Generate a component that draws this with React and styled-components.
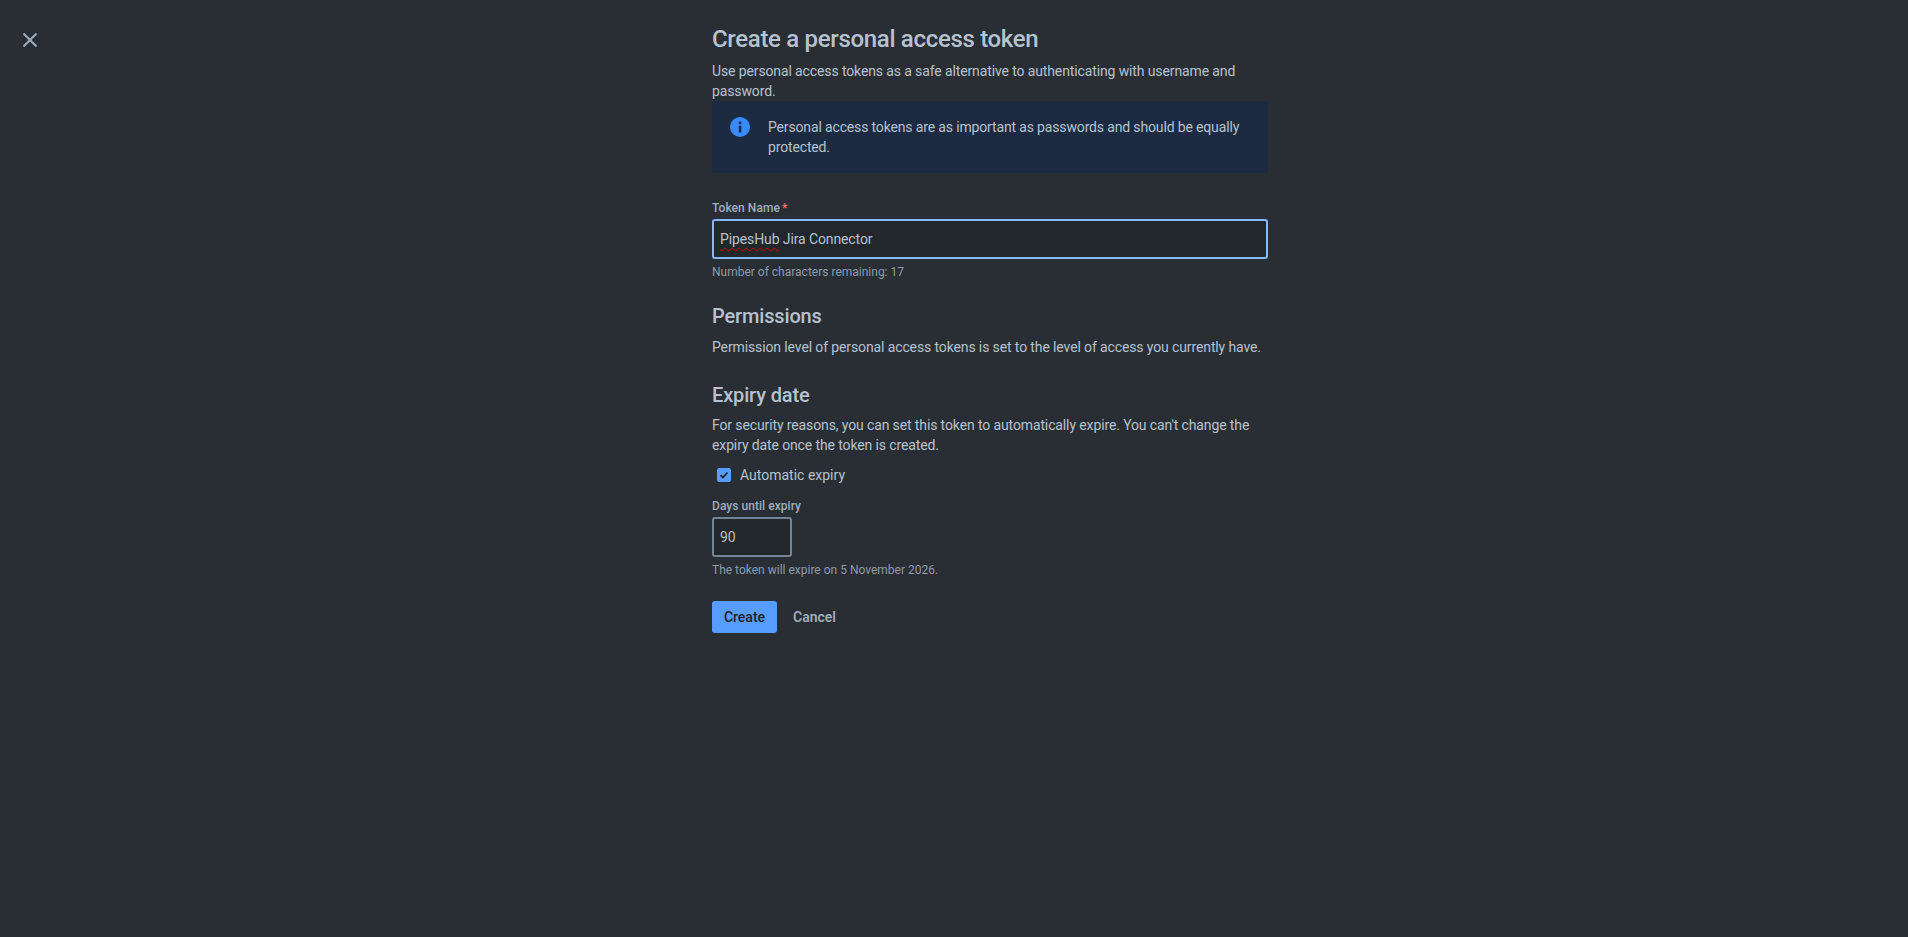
import styled, { createGlobalStyle } from "styled-components"

const Global = createGlobalStyle`
body{
  margin:0;
  background:#292E35;
  font-family:Roboto,"Noto Sans",sans-serif;
  color:#B6C2CF;
}
`

const App = () => {
  return (
    <Page>
      <Global />
      <CloseColumn>
        <CloseButton aria-label="Close">
          <svg width="16" height="16" viewBox="0 0 16 16" fill="none" stroke="#9FADBC" strokeWidth="2">
            <path d="M1.5 1.5l13 13M14.5 1.5l-13 13" />
          </svg>
        </CloseButton>
      </CloseColumn>
      <Form>
        <Title>Create a personal access token</Title>
        <Text>Use personal access tokens as a safe alternative to authenticating with username and password.</Text>
        <InfoBox>
          <InfoIcon width="24" height="24" viewBox="0 0 24 24">
            <circle cx="12" cy="12" r="10" fill="#388BFF" />
            <rect x="10.8" y="10.8" width="2.5" height="6.7" rx="0.5" fill="#1C2B41" />
            <circle cx="12.05" cy="7.9" r="1.4" fill="#1C2B41" />
          </InfoIcon>
          <InfoText>Personal access tokens are as important as passwords and should be equally protected.</InfoText>
        </InfoBox>

        <Label $top={27}>Token Name<Required>*</Required></Label>
        <FakeInput $focused>
          <Misspelled>PipesHub</Misspelled> Jira Connector
        </FakeInput>
        <Helper>Number of characters remaining: 17</Helper>

        <Heading $top={24}>Permissions</Heading>
        <Text $top={9}>Permission level of personal access tokens is set to the level of access you currently have.</Text>

        <Heading $top={26}>Expiry date</Heading>
        <Text $top={8}>For security reasons, you can set this token to automatically expire. You can't change the expiry date once the token is created.</Text>
        <CheckRow>
          <CheckBox>
            <svg width="10" height="10" viewBox="0 0 10 10" fill="none" stroke="#1D2125" strokeWidth="1.8">
              <path d="M1.5 5.2l2.4 2.3 4.6-5" />
            </svg>
          </CheckBox>
          Automatic expiry
        </CheckRow>

        <Label $top={13}>Days until expiry</Label>
        <FakeInput $width={80}>90</FakeInput>
        <Helper>The token will expire on 5 November 2026.</Helper>

        <Actions>
          <PrimaryButton>Create</PrimaryButton>
          <LinkButton>Cancel</LinkButton>
        </Actions>
      </Form>
    </Page>
  )
}

const Page = styled.div`
display:grid;
grid-template-columns:712px 556px;
min-height:100vh;
box-sizing:border-box;
padding-top:25px;
`
const CloseColumn = styled.div`
padding-left:22px;
padding-top:7px;
`
const CloseButton = styled.button`
display:block;
width:16px;
height:16px;
padding:0;
border:0;
background:none;
`
const Form = styled.div`
display:flex;
flex-direction:column;
`
const Title = styled.h1`
margin:0 0 8px;
font-size:24px;
line-height:28px;
font-weight:500;
letter-spacing:-0.32px;
color:#B6C2CF;
`
const Heading = styled.h2`
margin:${p => p.$top}px 0 0;
font-size:20px;
line-height:24px;
font-weight:500;
letter-spacing:-0.15px;
color:#B6C2CF;
`
const Text = styled.p`
margin:${p => p.$top || 0}px 0 0;
font-size:14px;
line-height:20px;
letter-spacing:-0.12px;
color:#B6C2CF;
`
const InfoBox = styled.div`
display:flex;
gap:16px;
padding:16px;
background:#1C2B41;
border-radius:3px;
`
const InfoIcon = styled.svg`
flex-shrink:0;
margin-top:-2px;
`
const InfoText = styled.div`
font-size:14px;
line-height:20px;
letter-spacing:-0.15px;
color:#B6C2CF;
`
const Label = styled.label`
margin-top:${p => p.$top}px;
font-size:12px;
line-height:16px;
font-weight:500;
letter-spacing:0.05px;
color:#9FADBC;
`
const Required = styled.span`
margin-left:2px;
color:#F87168;
`
const FakeInput = styled.div`
box-sizing:border-box;
display:flex;
align-items:center;
white-space:pre;
width:${p => (p.$width ? `${p.$width}px` : "100%")};
height:40px;
margin-top:3px;
padding:0 6px;
background:#22272B;
border:2px solid ${p => (p.$focused ? "#85B8FF" : "#738496")};
border-radius:3px;
font-size:14px;
letter-spacing:-0.11px;
color:#B6C2CF;
`
const Misspelled = styled.span`
text-decoration:underline wavy #E00000 1px;
text-underline-offset:3px;
`
const Helper = styled.div`
margin-top:5px;
font-size:12px;
line-height:16px;
color:#8C9BAB;
`
const CheckRow = styled.div`
display:flex;
align-items:center;
gap:9px;
margin-top:10px;
padding-left:5px;
font-size:14px;
line-height:20px;
color:#B6C2CF;
`
const CheckBox = styled.span`
display:flex;
align-items:center;
justify-content:center;
width:14px;
height:14px;
background:#579DFF;
border-radius:2px;
`
const Actions = styled.div`
display:flex;
gap:4px;
margin-top:23px;
`
const PrimaryButton = styled.button`
height:32px;
width:65px;
padding:0;
border:0;
border-radius:3px;
background:#579DFF;
color:#1D2125;
font:500 14px Roboto,sans-serif;
`
const LinkButton = styled.button`
height:32px;
padding:0 12px;
border:0;
background:none;
color:#9FADBC;
font:600 14px Roboto,sans-serif;
`

export default App
